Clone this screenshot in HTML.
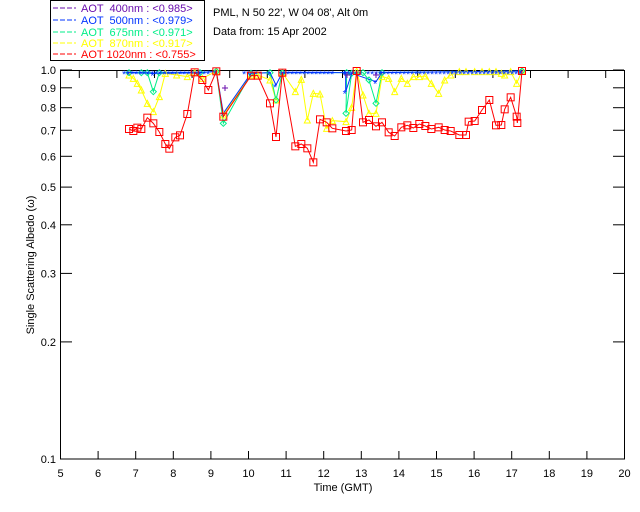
<!DOCTYPE html>
<html><head><meta charset="utf-8">
<style>
html,body{margin:0;padding:0;background:#fff;width:640px;height:512px;overflow:hidden}
svg{display:block}
text{font-family:"Liberation Sans",sans-serif;font-size:11px}
.lg{white-space:pre}
</style></head><body>
<svg id="s" width="640" height="512" xmlns="http://www.w3.org/2000/svg">
<rect x="50.5" y="0.5" width="154" height="60" fill="#fff" stroke="#000"/>
<g font-size="11">
<line x1="53" y1="8" x2="76" y2="8" stroke="#6a0dad" stroke-dasharray="5,2"/>
<text class="lg" x="81" y="12" fill="#6a0dad" xml:space="preserve">AOT  400nm : &lt;0.985&gt;</text>
<line x1="53" y1="20" x2="76" y2="20" stroke="#0033ff" stroke-dasharray="5,2"/>
<text class="lg" x="81" y="24" fill="#0033ff" xml:space="preserve">AOT  500nm : &lt;0.979&gt;</text>
<line x1="53" y1="32" x2="76" y2="32" stroke="#00ee88" stroke-dasharray="5,2"/>
<text class="lg" x="81" y="36" fill="#00ee88" xml:space="preserve">AOT  675nm : &lt;0.971&gt;</text>
<line x1="53" y1="43" x2="76" y2="43" stroke="#ffff00" stroke-dasharray="5,2"/>
<text class="lg" x="81" y="47" fill="#ffff00" xml:space="preserve">AOT  870nm : &lt;0.917&gt;</text>
<line x1="53" y1="54" x2="76" y2="54" stroke="#ff0000" stroke-dasharray="5,2"/>
<text class="lg" x="81" y="58" fill="#ff0000" xml:space="preserve">AOT 1020nm : &lt;0.755&gt;</text>
</g>
<text x="213" y="16">PML, N 50 22', W 04 08', Alt 0m</text>
<text x="213" y="35">Data from: 15 Apr 2002</text>
<text x="343" y="491" text-anchor="middle">Time (GMT)</text>
<text transform="translate(34,265) rotate(-90)" text-anchor="middle" font-size="10">Single Scattering Albedo (ω)</text>
<g id="g"></g>
</svg>
<script>
var g=document.getElementById('g'),h='';
function X(t){return 60.5+(t-5)*37.6}
function Y(v){return 459-(Math.log10(v)+1)*389}
h+='<rect x="60.5" y="70.5" width="564" height="388.5" fill="none" stroke="#000"/>';
for(var t=5;t<=20;t++){var x=X(t);h+='<line x1="'+x+'" y1="459" x2="'+x+'" y2="451" stroke="#000"/>';h+='<text x="'+x+'" y="477" text-anchor="middle" font-size="10">'+t+'</text>';}
for(var t=5.5;t<20;t+=1){var x=X(t);h+='<line x1="'+x+'" y1="70" x2="'+x+'" y2="78" stroke="#000"/>';}
var ys=[1,0.9,0.8,0.7,0.6,0.5,0.4,0.3,0.2,0.1];
ys.forEach(function(v){var y=Y(v);h+='<line x1="60" y1="'+y+'" x2="72" y2="'+y+'" stroke="#000"/><line x1="624" y1="'+y+'" x2="613" y2="'+y+'" stroke="#000"/>';h+='<text x="56" y="'+(y+4)+'" text-anchor="end" font-size="10">'+v.toFixed(1)+'</text>';});
var r=[[87,207],[100,213],[112,203],[124,207],[142,173],[160,190],[178,216],[196,252],[208,266],[226,232],[240,226],[262,162],[284,37],[307,60],[325,90],[349,34],[370,170],[453,47],[473,47],[510,130],[528,231],[547,38],[586,259],[604,252],[622,265],[640,307],[660,178],[680,187],[697,205],[738,213],[755,210],[770,33],[789,187],[807,180],[828,199],[846,187],[866,217],[884,228],[904,202],[922,196],[940,204],[958,192],[976,198],[994,207],[1016,202],[1034,210],[1052,213],[1078,225],[1098,225],[1106,185],[1124,183],[1146,150],[1168,120],[1188,196],[1204,195],[1214,148],[1232,112],[1250,170],[1252,189],[1266,33]].map(function(p){return [100+p[0]/3,60+p[1]/3]});
function poly(pts,c){return '<polyline fill="none" stroke="'+c+'" points="'+pts.map(function(p){return p.join(',')}).join(' ')+'"/>'}
var yl=[[87,45],[100,55],[112,70],[124,90],[142,130],[160,155],[178,110],[196,40],[230,45],[262,50],[284,37],[307,55],[349,34],[370,165],[453,45],[473,45],[510,60],[528,120],[547,38],[586,95],[604,58],[622,180],[640,100],[660,102],[680,205],[697,182],[738,185],[755,142],[770,33],[789,105],[807,160],[828,160],[846,50],[866,55],[884,95],[904,55],[922,70],[940,50],[958,50],[976,48],[994,70],[1016,100],[1034,60],[1052,45],[1078,35],[1098,35],[1124,35],[1146,35],[1168,35],[1188,35],[1204,40],[1214,45],[1232,35],[1250,70],[1266,33]].map(function(p){return [100+p[0]/3,60+p[1]/3]});
var gr=[[87,38],[124,38],[142,38],[160,95],[178,38],[300,38],[349,34],[370,190],[453,40],[510,38],[528,120],[547,38],[740,38],[738,160],[755,40],[789,38],[807,60],[828,130],[846,38],[1266,33]].map(function(p){return [100+p[0]/3,60+p[1]/3]});
var bl=[[87,38],[160,40],[300,38],[349,34],[370,160],[453,40],[510,38],[528,75],[547,38],[737,38],[737,95],[755,40],[828,65],[846,38],[1266,33]].map(function(p){return [100+p[0]/3,60+p[1]/3]});
h+=poly(yl,'#ffff00')+poly(gr,'#00ee88')+poly(bl,'#0033ff');
yl.forEach(function(p){h+='<path d="M'+(p[0]-3)+','+(p[1]+3)+'L'+p[0]+','+(p[1]-3)+'L'+(p[0]+3)+','+(p[1]+3)+'Z" fill="none" stroke="#ffff00"/>'});
gr.forEach(function(p){h+='<path d="M'+(p[0]-3)+','+p[1]+'L'+p[0]+','+(p[1]-3)+'L'+(p[0]+3)+','+p[1]+'L'+p[0]+','+(p[1]+3)+'Z" fill="none" stroke="#00ee88"/>'});
for(var x=125;x<525;x+=4){if((x>212&&x<245)||(x>260&&x<285)||(x>335&&x<345)||(x>362&&x<367))continue;h+='<text x="'+(x-3)+'" y="78" font-size="10" fill="#0033ff">*</text>'}
bl.forEach(function(p){h+='<text x="'+(p[0]-3)+'" y="'+(p[1]+6)+'" font-size="10" fill="#0033ff">*</text>'});
h+='<path d="M222,88h6M225,85v6M344,75h6M347,72v6M373,75h6M376,72v6" stroke="#6a0dad"/>';
h+=poly(r,'#ff0000');
r.forEach(function(p){h+='<rect x="'+(p[0]-3.5)+'" y="'+(p[1]-3.5)+'" width="7" height="7" fill="none" stroke="#ff0000"/>'});
g.innerHTML=h;
</script>
</body></html>
